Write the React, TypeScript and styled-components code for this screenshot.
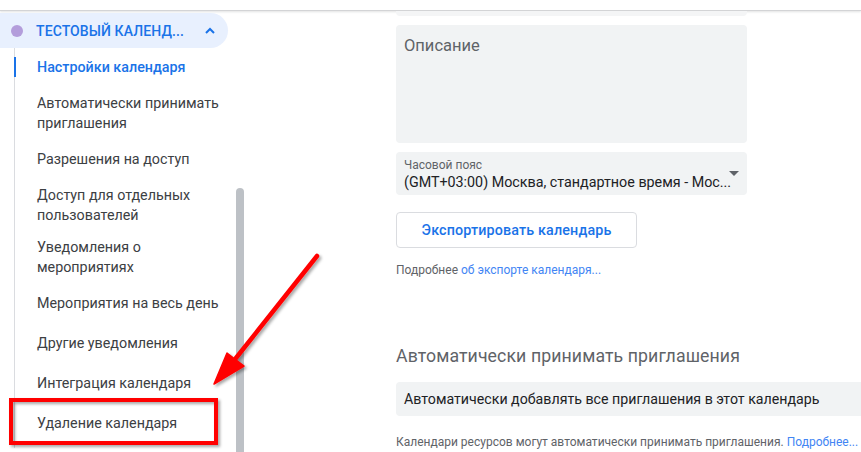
import styled, { createGlobalStyle } from "styled-components";

// <styled>
const GlobalStyle = createGlobalStyle`
  html, body {
    margin: 0;
    padding: 0;
    background: #fff;
  }
  body {
    font-family: Roboto, "Noto Sans", Arial, sans-serif;
    color: #3c4043;
    overflow: hidden;
  }
`;

const Page = styled.div`
  position: relative;
  width: 861px;
  height: 452px;
  overflow: hidden;
`;

const TopBar = styled.div`
  height: 10px;
  border-bottom: 1px solid #d3d4d6;
  box-shadow: 0 1px 2px rgba(60, 64, 67, 0.15);
`;

const Body = styled.div`
  display: flex;
`;

const Sidebar = styled.aside`
  position: relative;
  width: 245px;
  flex-shrink: 0;
  height: 441px;
`;

const CalendarHeader = styled.div`
  margin-top: 2px;
  width: 228px;
  height: 35px;
  display: flex;
  align-items: center;
  background: #e8f0fe;
  border-radius: 0 18px 18px 0;
  box-sizing: border-box;
  padding-left: 11px;
`;

const Dot = styled.span`
  width: 12px;
  height: 12px;
  border-radius: 50%;
  background: #b39ddb;
  margin-right: 13px;
`;

const CalendarName = styled.span`
  font-size: 14px;
  font-weight: 500;
  color: #1a73e8;
  letter-spacing: 0.1px;
  width: 168px;
`;

const Chevron = styled.svg`
  width: 12px;
  height: 12px;
`;

const Nav = styled.nav`
  margin-left: 14px;
  border-left: 1px solid #dadce0;
  height: 400px;
  display: flex;
  flex-direction: column;
`;

const NavItem = styled.div<{ $top: number; $active?: boolean }>`
  margin-top: ${(p) => p.$top}px;
  margin-left: -1px;
  padding-left: 21px;
  border-left: 2px solid ${(p) => (p.$active ? "#1a73e8" : "transparent")};
  font-size: 14.3px;
  line-height: 20px;
  color: ${(p) => (p.$active ? "#1a73e8" : "#3c4043")};
  font-weight: ${(p) => (p.$active ? 500 : 400)};
  width: 190px;
`;

const ScrollThumb = styled.div`
  position: absolute;
  left: 236px;
  top: 177px;
  bottom: 0;
  width: 8px;
  border-radius: 4px 4px 0 0;
  background: #bdc1c6;
`;

const Main = styled.main`
  margin-left: 151px;
  display: flex;
  flex-direction: column;
  flex: 1;
`;

const Field = styled.div<{ $height: number }>`
  width: 351px;
  height: ${(p) => p.$height}px;
  background: #f1f3f4;
  border-radius: 4px;
  box-sizing: border-box;
  position: relative;
`;

const PrevFieldEnd = styled.div`
  width: 351px;
  height: 5px;
  background: #f4f5f6;
  border-radius: 0 0 4px 4px;
`;

const DescriptionField = styled(Field)`
  margin-top: 9px;
  padding: 11px 8px;
  font-size: 16.5px;
  color: #5f6368;
`;

const SelectField = styled(Field)`
  margin-top: 9px;
  padding: 6px 8px 0;
  display: flex;
  flex-direction: column;
`;

const SelectLabel = styled.span`
  font-size: 12px;
  line-height: 14px;
  color: #5f6368;
`;

const SelectValue = styled.span`
  font-size: 14.3px;
  line-height: 20px;
  color: #202124;
`;

const Caret = styled.span`
  position: absolute;
  right: 8px;
  top: 19px;
  width: 0;
  height: 0;
  border-left: 5px solid transparent;
  border-right: 5px solid transparent;
  border-top: 5px solid #5f6368;
`;

const OutlineButton = styled.button`
  margin-top: 17px;
  width: 241px;
  height: 36px;
  background: #fff;
  border: 1px solid #dadce0;
  border-radius: 4px;
  font-family: inherit;
  font-size: 14.3px;
  font-weight: 500;
  color: #1a73e8;
  letter-spacing: 0.15px;
  cursor: pointer;
`;

const Hint = styled.p<{ $top: number }>`
  margin: ${(p) => p.$top}px 0 0;
  font-size: 12px;
  line-height: 14px;
  color: #5f6368;
  white-space: nowrap;
`;

const HintLink = styled.a`
  color: #4285f4;
  text-decoration: none;
`;

const SectionTitle = styled.h2`
  margin: 67px 0 0;
  font-size: 17.7px;
  font-weight: 400;
  line-height: 24px;
  color: #5f6368;
  letter-spacing: 0.1px;
`;

const OptionRow = styled.div`
  margin-top: 14px;
  height: 34px;
  margin-right: -20px;
  padding-left: 8px;
  display: flex;
  align-items: center;
  background: #f1f3f4;
  border-radius: 4px 0 0 4px;
  font-size: 14.2px;
  color: #202124;
  white-space: nowrap;
`;

const Annotation = styled.svg`
  position: absolute;
  left: 0;
  top: 0;
  width: 861px;
  height: 452px;
  pointer-events: none;
`;
// </styled>

interface navProps {
  label: string;
  top: number;
  active?: boolean;
}

const items: navProps[] = [
  { label: "Настройки календаря", top: 9, active: true },
  { label: "Автоматически принимать приглашения", top: 16 },
  { label: "Разрешения на доступ", top: 16 },
  { label: "Доступ для отдельных пользователей", top: 16 },
  { label: "Уведомления о мероприятиях", top: 12 },
  { label: "Мероприятия на весь день", top: 16 },
  { label: "Другие уведомления", top: 20 },
  { label: "Интеграция календаря", top: 20 },
  { label: "Удаление календаря", top: 20 },
];

function App() {
  return (
    <Page>
      <GlobalStyle />
      <TopBar />
      <Body>
        <Sidebar>
          <CalendarHeader>
            <Dot />
            <CalendarName>ТЕСТОВЫЙ КАЛЕНД...</CalendarName>
            <Chevron viewBox="0 0 12 12">
              <path
                d="M2 8 L6 4 L10 8"
                fill="none"
                stroke="#1a73e8"
                strokeWidth="2"
              />
            </Chevron>
          </CalendarHeader>
          <Nav>
            {items.map((item) => (
              <NavItem key={item.label} $top={item.top} $active={item.active}>
                {item.label}
              </NavItem>
            ))}
          </Nav>
          <ScrollThumb />
        </Sidebar>
        <Main>
          <PrevFieldEnd />
          <DescriptionField $height={118}>Описание</DescriptionField>
          <SelectField $height={43}>
            <SelectLabel>Часовой пояс</SelectLabel>
            <SelectValue>(GMT+03:00) Москва, стандартное время - Мос...</SelectValue>
            <Caret />
          </SelectField>
          <OutlineButton>Экспортировать календарь</OutlineButton>
          <Hint $top={15}>
            Подробнее <HintLink href="#">об экспорте календаря...</HintLink>
          </Hint>
          <SectionTitle>Автоматически принимать приглашения</SectionTitle>
          <OptionRow>Автоматически добавлять все приглашения в этот календарь</OptionRow>
          <Hint $top={19}>
            Календари ресурсов могут автоматически принимать приглашения.{" "}
            <HintLink href="#">Подробнее...</HintLink>
          </Hint>
        </Main>
      </Body>
      <Annotation viewBox="0 0 861 452">
        <defs>
          <filter id="shade" x="-20%" y="-20%" width="140%" height="140%">
            <feDropShadow dx="2" dy="2" stdDeviation="1.6" floodColor="#000" floodOpacity="0.35" />
          </filter>
        </defs>
        <g filter="url(#shade)">
          <rect x="11" y="400" width="205" height="43" fill="none" stroke="#ff0000" strokeWidth="4" />
          <path d="M317 256 L236 358" stroke="#ff0000" strokeWidth="4.5" strokeLinecap="round" />
          <path d="M214 384 L227 353 L244 366 Z" fill="#ff0000" stroke="#ff0000" strokeWidth="1.5" strokeLinejoin="round" />
        </g>
      </Annotation>
    </Page>
  );
}

export default App;
